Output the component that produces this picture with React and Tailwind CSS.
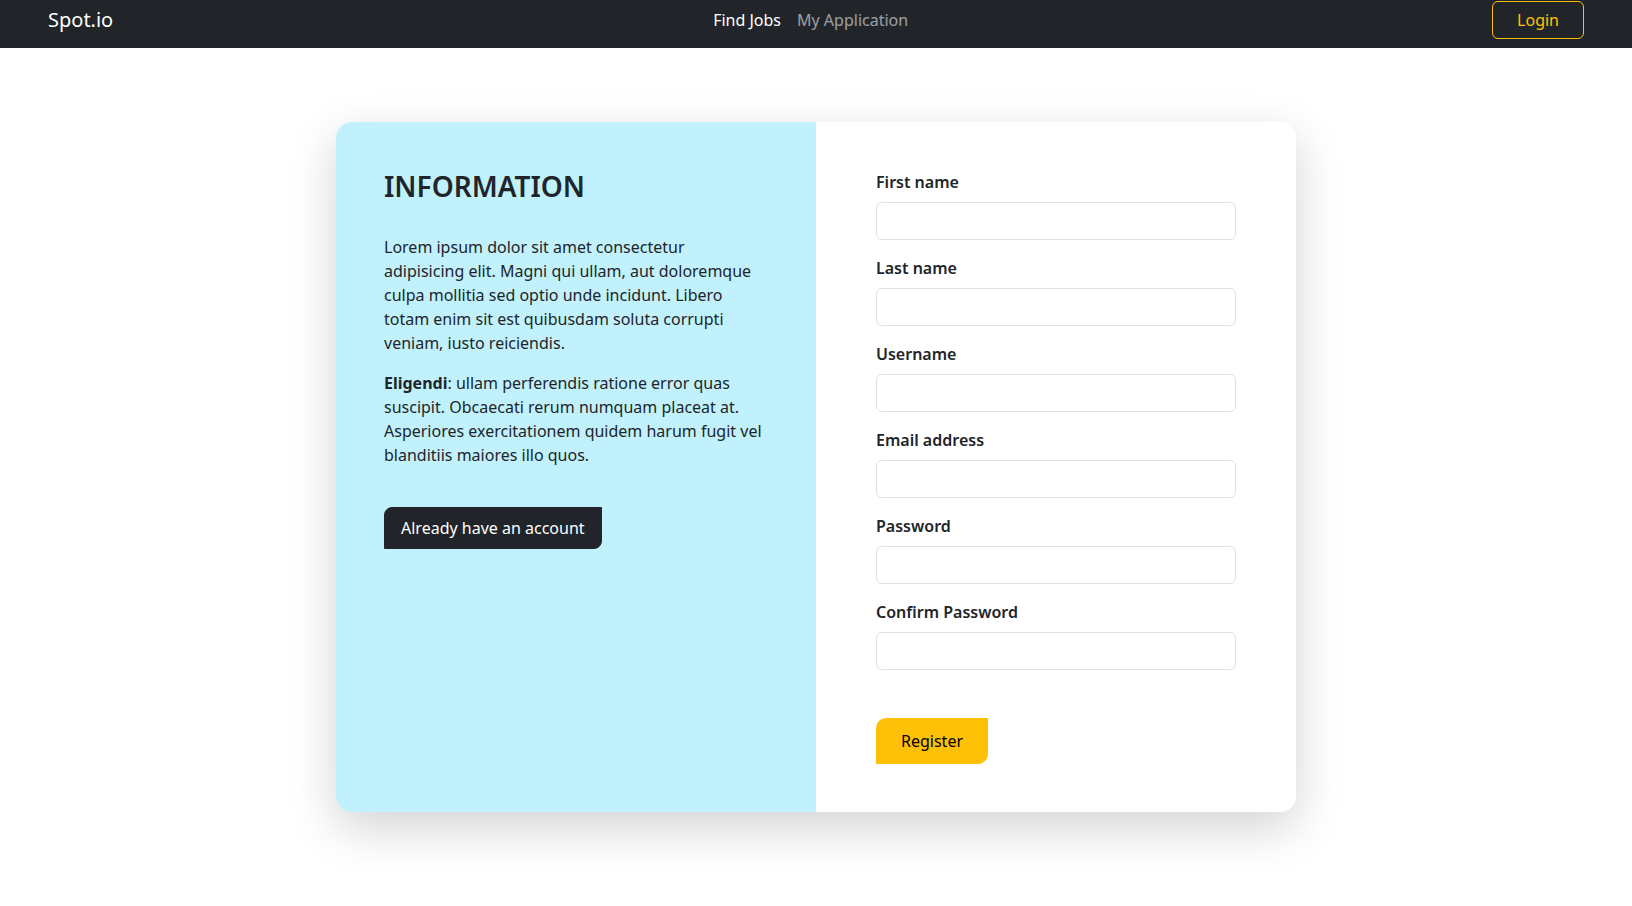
import { useState } from 'react'

const fields = [
  { id: 'firstName', label: 'First name', type: 'text' },
  { id: 'lastName', label: 'Last name', type: 'text' },
  { id: 'username', label: 'Username', type: 'text' },
  { id: 'email', label: 'Email address', type: 'email' },
  { id: 'password', label: 'Password', type: 'password' },
  { id: 'confirm', label: 'Confirm Password', type: 'password' },
]

function Navbar() {
  return (
    <nav className="h-12 bg-[#212529] px-12">
      <div className="flex h-[39px] items-center">
        <a href="#" className="mr-4 text-xl leading-[30px] text-white">
          Spot.io
        </a>
        <ul className="mx-auto flex">
          <li>
            <a href="#" className="block px-2 text-base leading-6 text-white">
              Find Jobs
            </a>
          </li>
          <li>
            <a href="#" className="block px-2 text-base leading-6 text-white/55">
              My Application
            </a>
          </li>
        </ul>
        <button className="rounded-md border border-[#ffc107] px-6 py-[6px] text-base leading-6 text-[#ffc107]">
          Login
        </button>
      </div>
    </nav>
  )
}

function App() {
  const [form, setForm] = useState({})

  const update = (id) => (e) => setForm({ ...form, [id]: e.target.value })

  return (
    <div className="min-h-screen bg-white font-['Noto_Sans',sans-serif] text-[#212529]">
      <Navbar />
      <main className="flex justify-center pt-[74px]">
        <div className="flex w-[960px] overflow-hidden rounded-2xl shadow-[0_1rem_3rem_rgba(0,0,0,0.175)]">
          <div className="w-1/2 bg-[#c0f1fc] px-12 pt-12">
            <h2 className="mb-[31px] text-[28px] font-semibold leading-[1.2]">INFORMATION</h2>
            <p className="mb-4 text-base leading-6">
              Lorem ipsum dolor sit amet consectetur adipisicing elit. Magni qui ullam, aut
              doloremque culpa mollitia sed optio unde incidunt. Libero totam enim sit est
              quibusdam soluta corrupti veniam, iusto reiciendis.
            </p>
            <p className="mb-4 text-base leading-6">
              <strong className="font-bold">Eligendi</strong>: ullam perferendis ratione error
              quas suscipit. Obcaecati rerum numquam placeat at. Asperiores exercitationem
              quidem harum fugit vel blanditiis maiores illo quos.
            </p>
            <button className="mt-6 rounded-tl-lg rounded-br-lg border border-[#212529] bg-[#212529] px-4 py-2 text-base leading-6 text-white">
              Already have an account
            </button>
          </div>
          <div className="w-1/2 bg-white px-[60px] py-12">
            <form onSubmit={(e) => e.preventDefault()}>
              {fields.map((f) => (
                <div key={f.id} className="mb-4">
                  <label htmlFor={f.id} className="mb-2 block text-base font-semibold leading-6">
                    {f.label}
                  </label>
                  <input
                    id={f.id}
                    type={f.type}
                    value={form[f.id] || ''}
                    onChange={update(f.id)}
                    className="block h-[38px] w-full rounded-md border border-[#dee2e6] px-3 text-base outline-none"
                  />
                </div>
              ))}
              <button
                type="submit"
                className="mt-8 rounded-tl-[10px] rounded-br-[10px] bg-[#ffc107] px-[25px] py-[11px] text-base leading-6 text-black"
              >
                Register
              </button>
            </form>
          </div>
        </div>
      </main>
    </div>
  )
}

export default App
